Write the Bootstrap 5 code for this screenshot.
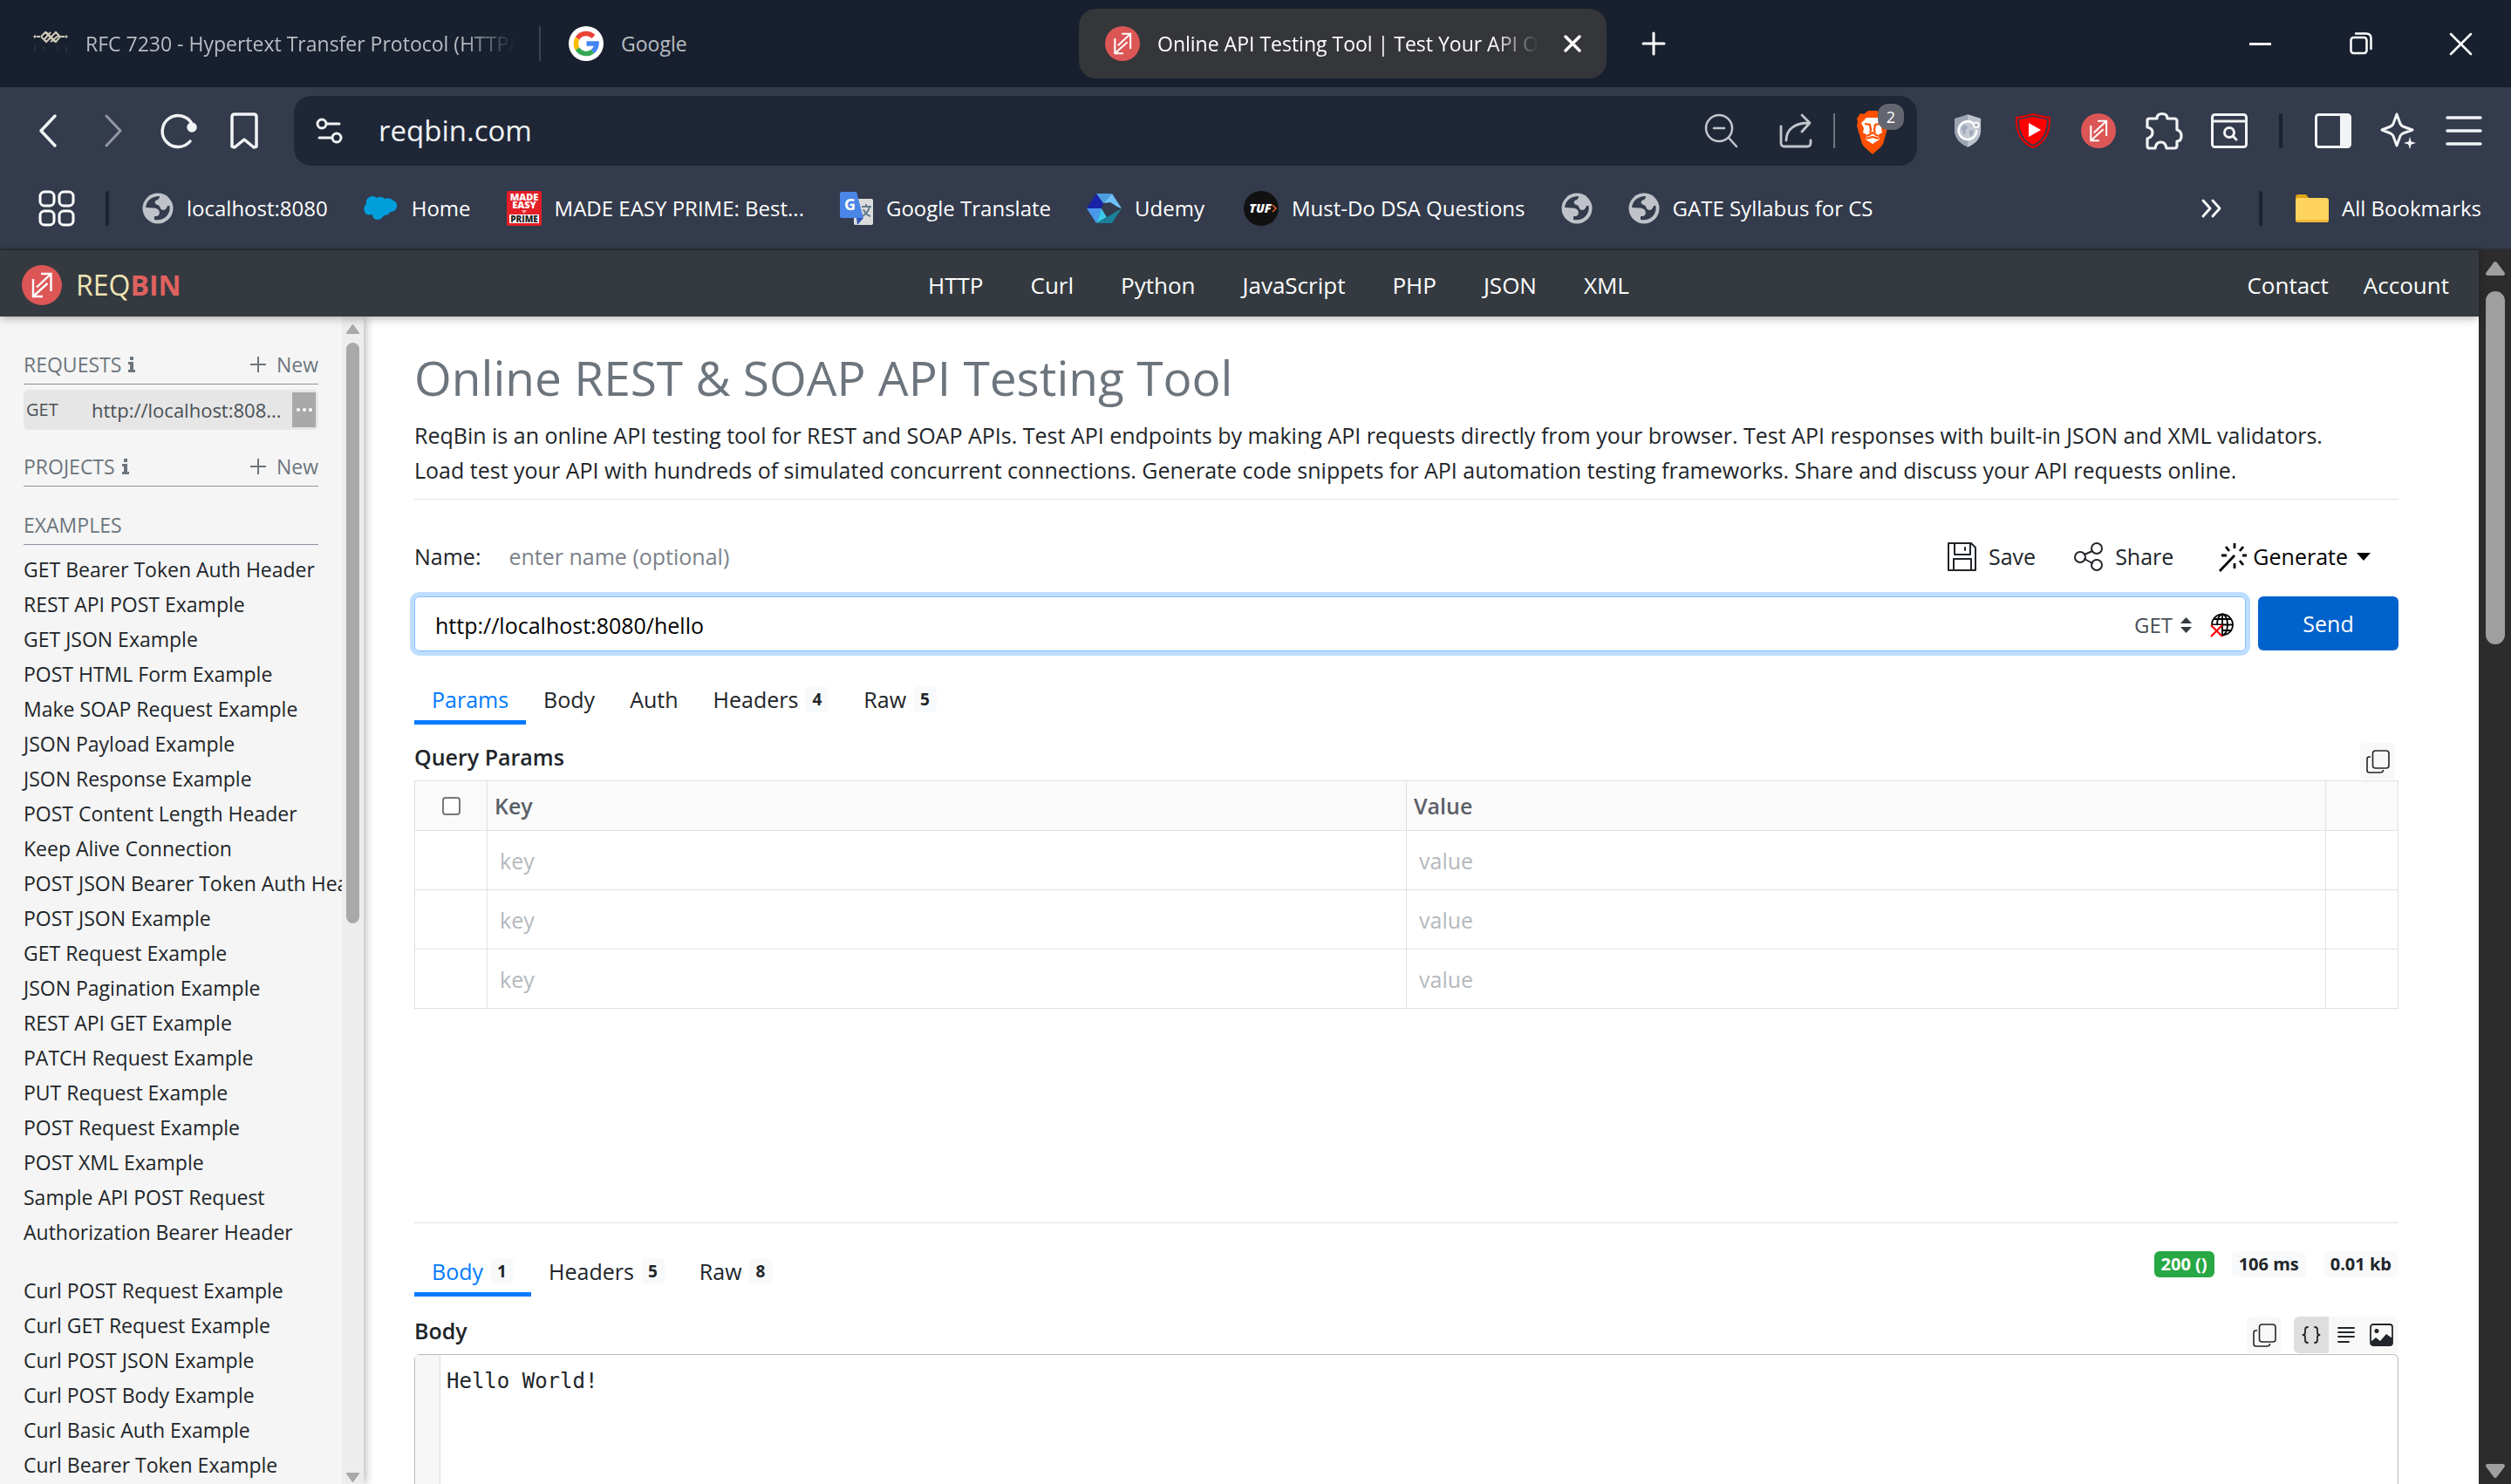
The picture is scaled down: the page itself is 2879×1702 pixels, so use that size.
<!DOCTYPE html>
<html lang="en">
<head>
<meta charset="utf-8">
<meta name="viewport" content="width=device-width, initial-scale=1">
<title>Online API Testing Tool | Test Your API Online</title>
<link href="https://cdn.jsdelivr.net/npm/bootstrap@5.3.0/dist/css/bootstrap.min.css" rel="stylesheet">
<script src="https://cdn.jsdelivr.net/npm/bootstrap@5.3.0/dist/js/bootstrap.bundle.min.js"></script>
<style>
  body { font-family: "Open Sans", "Noto Sans", sans-serif; font-size: 25px; line-height: 40px; color: #212529; background: #fff; }
  svg { display: block; flex: none; overflow: visible; }
  button, input, select { font: inherit; color: inherit; }
  a { color: inherit; text-decoration: none; }
  .plain { background: none; border: 0; padding: 0; }
  .line-icon { fill: none; stroke: currentColor; stroke-linecap: round; stroke-linejoin: round; }
  /* browser tabs */
  .tabstrip { height: 100px; background: #18202f; color: #b9bcc2; font-size: 23px; }
  .btab { height: 80px; gap: 20px; }
  .btab-active { width: 605px; margin-left: 424px; padding: 0 28px 0 30px; background: #35363a; color: #fff; border-radius: 20px; }
  .fade-end { overflow: hidden; white-space: nowrap; -webkit-mask-image: linear-gradient(90deg, #000 88%, transparent); mask-image: linear-gradient(90deg, #000 88%, transparent); }
  .tab-rfc { width: 594px; padding: 0 4px 0 38px; }
  .tab-google { width: 193px; padding-left: 32px; }
  .vline { width: 2px; height: 40px; background: #3b4250; flex: none; }
  .winbtn { width: 115px; height: 100px; color: #fff; }
  /* toolbar */
  .toolbar { height: 100px; padding: 0 17px; background: #333b4c; color: #f2f3f5; }
  .slot { width: 75px; height: 80px; flex: none; display: flex; align-items: center; justify-content: center; }
  .dark-rule { width: 4px; height: 40px; border-radius: 2px; background: #1b2232; flex: none; }
  .rule-tools { margin: 0 20px; }
  .rule-start { margin: 0 38px 0 35px; }
  .rule-end { margin: 0 38px 0 42px; }
  .address { height: 80px; border-radius: 20px; margin: 0 20px; background: #1f2737; padding: 0 16px 0 25px; }
  .address input { font-size: 33px; outline: 0; }
  .count { top: -8px; left: 25px; width: 30px; height: 30px; border-radius: 12px; background: #63666f; font-size: 18px; line-height: 30px; text-align: center; color: #fff; }
  .bookmarks { height: 87px; padding: 0 34px 7px 44px; background: #333b4c; border-bottom: 2px solid #2c2f36; color: #fff; font-size: 24px; }
  .bm { display: flex; align-items: center; gap: 15px; white-space: nowrap; margin-right: 41px; }
  .bm:last-child { margin-right: 0; }
  /* site header */
  .sitebar { height: 76px; background: #343a40; color: #fff; padding: 3px 34px 0 25px; font-size: 26px; position: relative; z-index: 3; box-shadow: 0 2px 10px rgba(0,0,0,.3); }
  .brand-a { font-size: 32px; color: #efe3b4; }
  .brand-a b { color: #e0625f; font-weight: 700; }
  .topnav { gap: 54px; padding-left: 148px; }
  /* scrollbars */
  .pagebar { width: 37px; background: #2c2c2c; padding: 12px 0 6px; flex: none; }
  .pagebar i { width: 22px; border-radius: 11px; background: #9f9f9f; height: 405px; margin-top: 17px; }
  .sidebar { width: 417px; background: #f5f5f5; box-shadow: 2px 0 10px rgba(0,0,0,.3); flex: none; z-index: 2; font-size: 23px; }
  .sidebar-list { padding: 35px 0 0 27px; overflow: hidden; }
  .sidebar-list a.ex { display: block; white-space: nowrap; height: 40px; }
  .ex-gap { height: 27px; }
  .sidegutter { width: 25px; background: #ededed; padding: 9px 0 2px; flex: none; }
  .sidegutter i { width: 15px; border-radius: 8px; background: #a9a9a9; height: 666px; margin-top: 10px; }
  .sec { margin-right: 27px; height: 43px; padding-bottom: 2px; border-bottom: 1px solid #8e92a3; color: #6c757d; }
  .req { margin: 6px 27px 22px 0; height: 46px; background: #e6e6e6; border-radius: 6px; padding: 0 3px; color: #495057; font-size: 22px; }
  .req .verb { width: 75px; font-size: 20px; }
  .req button { width: 27px; height: 40px; background: #a9a9a9; color: #fff; }
  .newbtn { gap: 12px; }
  /* main column */
  .mainpane { padding: 37px 92px 0 58px; min-width: 0; }
  .mainpane h1 { font-size: 55px; line-height: 66px; color: #6c757d; margin: 0 0 13px; font-weight: 400; }
  .rule { border-top: 1px solid #dee2e6; }
  .rule-intro { margin: 13px 0 45px; }
  .namerow { margin-bottom: 26px; gap: 32px; }
  .tools { gap: 44px; }
  .tools button { gap: 14px; }
  .tools button.gen { gap: 6px; }
  .urlbox { height: 63px; border: 1px solid #80bdff; border-radius: 6px; box-shadow: 0 0 0 5px #bfdeff; padding: 2px 13px 0 23px; }
  .urlbox input { outline: 0; color: #000; font-size: 25px; }
  .urlbox select { appearance: none; -webkit-appearance: none; width: 53px; color: #495057; font-size: 24px; }
  .geo { margin-left: 21px; }
  .send { width: 161px; height: 62px; background: #0062cc; color: #fff; border-radius: 6px; margin-left: 14px; }
  .tabs-req { margin-top: 28px; }
  .ptabs button { height: 56px; padding: 3px 20px 0; border-bottom: 5px solid transparent; display: flex; align-items: center; gap: 8px; }
  .ptabs button.on { color: #007bff; border-color: #007bff; }
  .num { min-width: 27px; height: 30px; line-height: 30px; font-size: 19px; font-weight: 700; border-radius: 6px; background: #f8f9fa; color: #212529; padding: 0 7px; text-align: center; white-space: nowrap; }
  .stats { gap: 20px; margin-top: 4px; }
  .stats .num { font-size: 20px; padding: 0 8px; }
  .stats .num-ok { background: #28a745; color: #fff; }
  .h-sub { font-weight: 600; font-size: 25px; line-height: 40px; margin: 0; }
  .subhead { height: 47px; margin-top: 17px; padding-bottom: 1px; }
  .subhead-res { margin-top: 19px; gap: 14px; }
  .toolbtn { width: 40px; height: 42px; background: #f8f8f8; display: flex; align-items: center; justify-content: center; }
  .toolbtn.picked { background: #dedede; }
  .kv { table-layout: fixed; margin: 0; border-color: #dee2e6; }
  .kv th { height: 57px; padding: 0 8px; vertical-align: middle; background: #fafafa; color: #5a6067; font-weight: 600; }
  .kv td { height: 68px; padding: 0 14px; vertical-align: middle; }
  .kv .edge { width: 83px; }
  .kv input[type=text] { width: 100%; outline: 0; }
  .kv input::placeholder { color: #b4b9be; opacity: 1; }
  .namebox::placeholder { color: #7b828a; opacity: 1; }
  .kv input[type=checkbox] { appearance: none; -webkit-appearance: none; width: 21px; height: 21px; border: 2px solid #767676; border-radius: 4px; display: block; margin: auto; background: #fff; }
  .result { border: 1px solid #b9bbbe; border-radius: 6px 6px 0 0; border-bottom: 0; }
  .result .lines { width: 29px; background: #f7f7f7; border-right: 1px solid #ddd; }
  .result pre { font-family: "DejaVu Sans Mono", monospace; font-size: 24px; line-height: 40px; margin: 10px 0 0 7px; }
  .spacer-params { height: 245px; }
  .fit { min-height: 0; min-width: 0; }
</style>
</head>
<body class="vh-100 overflow-hidden d-flex flex-column">
<svg width="0" height="0" class="position-absolute" aria-hidden="true">
  <defs>
    <symbol id="reqbin" viewBox="0 0 46 46"><circle cx="23" cy="23" r="23" fill="#dc5656"/><g fill="none" stroke="#fff" stroke-width="2.400"><path d="M22 10H33.500V30M33.500 10L17 25.500M13 16V36H24M13 36L29.500 21"/></g></symbol>
    <symbol id="globe" viewBox="0 0 36 36"><circle cx="18" cy="18" r="17.500" fill="#bfc3c9"/><path d="M4 17C5 9 11 4 20 4Q20 8 15.500 9Q13.500 11 16 13.500Q20 14 20.500 17Q21 20 25 20Q28 19 29 15L31.500 15C33 25 25 33 14 31V27H17Q21 25 19.500 21Q18 17.500 13 17.500Z" fill="#333b4c"/></symbol>
    <symbol id="copy" viewBox="0 0 27 27"><g fill="none" stroke="#212529" stroke-width="1.600"><rect x="7.500" y="1" width="18.500" height="20" rx="3"/><path d="M5 8H3.500Q1 8 1 10.500V23.500Q1 26 3.500 26H16Q19.500 26 19.500 23"/></g></symbol>
    <symbol id="info" viewBox="0 0 8 18"><path d="M2 0h4v4H2zM0 6h6v9h2v3H0v-3h2V9H0z" fill="#6c757d"/></symbol>
  </defs>
</svg>

<header class="flex-shrink-0">
  <div class="tabstrip d-flex align-items-center">
    <div class="btab tab-rfc d-flex align-items-center">
      <svg width="40" height="28" viewBox="0 0 40 28"><g fill="none" stroke="#cfc9b8" stroke-width="2"><path d="M1 7l2-2M1 5l2 2M37 5l2 2M37 7l2-2M4 6h4M32 6h4M9 6l5-5 11 11M9 6l6 6L26 1l5 5-5 6L15 1M20 1l-8 9M20 12l10-8"/></g><path d="M2 16v8M12 17v5M28 16v6M38 17v8" stroke="#262d38" stroke-width="2"/></svg>
      <span class="fade-end flex-grow-1">RFC 7230 - Hypertext Transfer Protocol (HTTP/1.1)</span>
    </div>
    <div class="vline ms-4"></div>
    <div class="btab tab-google d-flex align-items-center">
      <svg width="40" height="40" viewBox="0 0 40 40"><circle cx="20" cy="20" r="20" fill="#fff"/><g fill="none" stroke-width="5.500"><path d="M28.500 12A12 12 0 0 0 10 14" stroke="#ea4335"/><path d="M10 14A12 12 0 0 0 10 26" stroke="#fbbc05"/><path d="M10 26A12 12 0 0 0 27.500 29" stroke="#34a853"/><path d="M27.500 29A12 12 0 0 0 32 20H20.500" stroke="#4285f4"/></g></svg>
      <span>Google</span>
    </div>
    <div class="btab btab-active d-flex align-items-center">
      <svg width="40" height="40"><use href="#reqbin"/></svg>
      <span class="fade-end flex-grow-1">Online API Testing Tool | Test Your API Online</span>
      <button class="plain ms-2" aria-label="Close tab"><svg class="line-icon" width="22" height="22" viewBox="0 0 22 22" stroke-width="3.500"><path d="M3 3l16 16M19 3L3 19"/></svg></button>
    </div>
    <button class="plain ms-4 ps-3" aria-label="New tab"><svg class="line-icon text-white" width="28" height="28" viewBox="0 0 28 28" stroke-width="3"><path d="M14 2v24M2 14h24"/></svg></button>
    <div class="ms-auto d-flex">
      <button class="plain winbtn d-flex align-items-center justify-content-center" aria-label="Minimise"><svg width="25" height="3"><path d="M0 1.500h25" stroke="#fff" stroke-width="3"/></svg></button>
      <button class="plain winbtn d-flex align-items-center justify-content-center" aria-label="Restore"><svg class="line-icon" width="26" height="26" viewBox="0 0 26 26" stroke-width="2.500"><rect x="1.500" y="6" width="18" height="18" rx="3"/><path d="M7 1.500h12q5.500 0 5.500 5.500v12"/></svg></button>
      <button class="plain winbtn d-flex align-items-center justify-content-center" aria-label="Close"><svg class="line-icon" width="25" height="25" viewBox="0 0 25 25" stroke-width="2.500"><path d="M1 1l23 23M24 1L1 24"/></svg></button>
    </div>
  </div>

  <div class="toolbar d-flex align-items-center">
    <button class="plain slot" aria-label="Back"><svg class="line-icon" width="20" height="38" viewBox="0 0 20 38" stroke-width="3.500"><path d="M18 2L2 19l16 17"/></svg></button>
    <button class="plain slot opacity-50" aria-label="Forward"><svg class="line-icon" width="20" height="38" viewBox="0 0 20 38" stroke-width="3"><path d="M2 2l16 17L2 36"/></svg></button>
    <button class="plain slot" aria-label="Reload"><svg class="line-icon" width="42" height="40" viewBox="0 0 42 40" stroke-width="3.500"><path d="M34 32A18 18 0 1 1 36 12"/><circle cx="36" cy="16" r="4" fill="currentColor"/></svg></button>
    <button class="plain slot" aria-label="Bookmark"><svg class="line-icon" width="32" height="42" viewBox="0 0 32 42" stroke-width="3.500"><path d="M2 5q0-3 3-3h22q3 0 3 3v34l-3 1-11-9-11 9-3-1z"/></svg></button>
    <div class="address d-flex align-items-center flex-grow-1">
      <svg class="line-icon me-3" width="32" height="30" viewBox="0 0 32 30" stroke-width="3"><circle cx="7" cy="7" r="5"/><path d="M13 7h14M4 23h13"/><circle cx="24" cy="23" r="5"/></svg>
      <input class="plain flex-grow-1 ms-4" aria-label="Address" value="reqbin.com">
      <svg class="line-icon" width="38" height="38" viewBox="0 0 38 38" stroke-width="2.500" color="#c3c6cc"><circle cx="17" cy="16" r="15"/><path d="M11 16h12M28 27l9 10"/></svg>
      <svg class="line-icon ms-5" width="38" height="40" viewBox="0 0 38 40" stroke-width="2.800" color="#c3c6cc"><path d="M2 15v19q0 4 4 4h26q4 0 4-4v-3M8 31C8 18 18 11 34 11M26 2l9 9-9 10"/></svg>
      <div class="vline bg-secondary ms-4"></div>
      <div class="position-relative ms-4 me-3">
        <svg width="38" height="46" viewBox="0 0 38 46"><path d="M9 4l5-4h10l5 4 4-1 4 6-1 4 1 4-6 21-3 4-9 8-9-8-3-4L1 17l1-4-1-4 4-6z" fill="#ff5000"/><path d="M12 8h14l6 6-3 6 1 5-5 3 2 5-8 5-8-5 2-5-5-3 1-5-3-6z" fill="#fff"/><path d="M10 15l6 1 1 6-1 3M28 15l-6 1-1 6 1 3M13 29l6-4 6 4M12 32l7-2 7 2" fill="none" stroke="#ff5000" stroke-width="2.200"/></svg>
        <span class="count position-absolute">2</span>
      </div>
    </div>
    <button class="plain slot" aria-label="Guard"><svg width="32" height="40" viewBox="0 0 34 40"><path d="M17 0l16 5v14q0 14-16 21Q1 33 1 19V5z" fill="#9ca4b2"/><path d="M17 0l16 5v14q0 14-16 21z" fill="#bcc2cb"/><circle cx="17" cy="19" r="10.500" fill="#c3cad3"/><path d="M9 16q4-5 7-2t-2 5l1 4-3 1zM19 20l5-1-1 6-3 2z" fill="#a0aab8"/><path d="M24 11A11 11 0 1 0 28 19" fill="none" stroke="#fff" stroke-width="2.800"/><circle cx="27.500" cy="13" r="3" fill="#aab2be" stroke="#fff" stroke-width="2"/></svg></button>
    <button class="plain slot" aria-label="Video blocker"><svg width="40" height="40" viewBox="0 0 40 40"><path d="M20 1q10 3 19 4 1 26-19 34Q0 31 1 5q9-1 19-4z" fill="#333b4c" stroke="#e60000" stroke-width="2"/><path d="M20 4q8 2 16 3 0 22-16 29Q4 29 4 7q8-1 16-3z" fill="#f00"/><path d="M15 11l14 8-14 8z" fill="#fff"/></svg></button>
    <button class="plain slot" aria-label="ReqBin extension"><svg width="40" height="40"><use href="#reqbin"/></svg></button>
    <button class="plain slot" aria-label="Extensions"><svg class="line-icon" width="42" height="43" viewBox="0 0 42 43" stroke-width="3.200"><path d="M4 7H13Q13 1.500 19 1.500T25 7H33Q36 7 36 10V20Q41 21 41 27T36 33V38Q36 41 33 41H24Q23 34 17.500 34T11 41H4Q2 41 2 38V30Q8 28 8 23T2 17V9Q2 7 4 7z"/></svg></button>
    <button class="plain slot" aria-label="Search tabs"><svg class="line-icon" width="42" height="40" viewBox="0 0 42 40" stroke-width="3"><rect x="1.500" y="1.500" width="39" height="37" rx="3"/><path d="M2 9h38"/><circle cx="21" cy="22" r="5.500"/><path d="M25 26l4 4"/></svg></button>
    <div class="dark-rule rule-tools"></div>
    <button class="plain slot" aria-label="Side panel"><svg width="42" height="40" viewBox="0 0 42 40"><rect x="1.500" y="1.500" width="39" height="37" rx="3" fill="none" stroke="#f2f3f5" stroke-width="3"/><path d="M29 1h10v38H29z" fill="#f2f3f5"/></svg></button>
    <button class="plain slot" aria-label="Assistant"><svg class="line-icon" width="42" height="42" viewBox="0 0 42 42" stroke-width="3"><path d="M19 2l4 11q1 2 3 3l11 4-11 4q-2 1-3 3l-4 11-4-11q-1-2-3-3L2 20l10-4q2-1 3-3z"/><path d="M34 26l2 7 7 2-7 2-2 7-2-7-7-2 7-2z" fill="currentColor" stroke="#333b4c" stroke-width="1"/></svg></button>
    <button class="plain slot" aria-label="Menu"><svg class="line-icon" width="42" height="34" viewBox="0 0 42 34" stroke-width="3.500"><path d="M2 2h38M2 17h38M2 32h38"/></svg></button>
  </div>

  <nav class="bookmarks d-flex align-items-center" aria-label="Bookmarks">
    <svg class="line-icon" width="42" height="42" viewBox="0 0 42 42" stroke-width="3"><rect x="2" y="2" width="16" height="16" rx="5"/><rect x="24" y="2" width="16" height="16" rx="5"/><rect x="2" y="24" width="16" height="16" rx="5"/><rect x="24" y="24" width="16" height="16" rx="5"/></svg>
    <div class="dark-rule rule-start"></div>
    <a class="bm" href="#"><svg width="36" height="36"><use href="#globe"/></svg>localhost:8080</a>
    <a class="bm" href="#"><svg width="40" height="28" viewBox="0 0 40 28"><path d="M3 9q-1-4 2-7 5-4 10 0 5-3 9 1 6-2 10 2 5 2 4 7-1 6-8 6-1 4-7 4-2 5-8 5-5-1-5-6-7 2-9-3-2-6 2-9z" fill="#009edb"/></svg>Home</a>
    <a class="bm" href="#"><svg width="40" height="40" viewBox="0 0 40 40"><rect width="40" height="40" rx="2" fill="#e31e26"/><text x="20" y="11" font-size="11" font-weight="800" fill="#fff" text-anchor="middle">MADE</text><text x="20" y="20" font-size="11" font-weight="800" fill="#fff" text-anchor="middle">EASY</text><path d="M17 22h6l-3 4z" fill="#f6a8ab"/><rect x="3" y="27" width="34" height="10" fill="#fff"/><text x="20" y="36" font-size="10" font-weight="800" fill="#222" text-anchor="middle">PRIME</text></svg>MADE EASY PRIME: Best...</a>
    <a class="bm" href="#"><svg width="38" height="38" viewBox="0 0 38 38"><rect x="16" y="8" width="22" height="30" rx="2" fill="#dcdcdc"/><path d="M2 0h17l8 30H2q-2 0-2-2V2q0-2 2-2z" fill="#4a86e8"/><path d="M19 30h8l-7 8z" fill="#3155b5"/><text x="5" y="21" font-size="18" font-weight="700" fill="#fff">G</text><path d="M25 17h11M30 14v3M34 17q-1 6-8 11M27 20q2 6 8 8" fill="none" stroke="#607d8b" stroke-width="2"/></svg>Google Translate</a>
    <a class="bm" href="#"><svg width="40" height="34" viewBox="0 0 40 34"><path d="M0 17L11 0l8 11-2 6z" fill="#1722a8"/><path d="M11 0h18l-10 11z" fill="#4a9fe0"/><path d="M29 0l11 17-21-6z" fill="#6fc1f7"/><path d="M0 17h17l-6 17z" fill="#4a97ee"/><path d="M17 17l6 10-12 7z" fill="#3cc8ea"/><path d="M40 17L29 34H11l12-7z" fill="#1c7f98"/><path d="M19 11l8-1 11 7-15 10-6-10z" fill="#333b4c"/></svg>Udemy</a>
    <a class="bm" href="#"><svg class="ms-1" width="40" height="40" viewBox="0 0 40 40"><circle cx="20" cy="20" r="20" fill="#111"/><text x="19" y="25" font-size="14" font-weight="800" font-style="italic" fill="#fff" text-anchor="middle">TUF</text><path d="M33 16l4 4-4 4" fill="none" stroke="#e8632b" stroke-width="1.500"/></svg>Must-Do DSA Questions</a>
    <a class="bm" href="#" aria-label="Saved page"><svg width="36" height="36"><use href="#globe"/></svg></a>
    <a class="bm" href="#"><svg width="36" height="36"><use href="#globe"/></svg>GATE Syllabus for CS</a>
    <button class="plain ms-auto" aria-label="More bookmarks"><svg class="line-icon" width="24" height="20" viewBox="0 0 24 20" stroke-width="2.800"><path d="M2 1l8 9-8 9M13 1l8 9-8 9"/></svg></button>
    <div class="dark-rule rule-end"></div>
    <a class="bm" href="#"><svg width="38" height="32" viewBox="0 0 38 32"><path d="M0 3q0-3 3-3h9l4 5h-2l-3 5H0z" fill="#dfa31a"/><rect y="4" width="38" height="28" rx="3" fill="#ffd45e"/><path d="M0 29h38q0 3-3 3H3q-3 0-3-3z" fill="#eeb83c"/></svg>All Bookmarks</a>
  </nav>
</header>

<div class="d-flex flex-grow-1 fit">
  <div class="d-flex flex-column flex-grow-1 fit">
    <div class="sitebar d-flex align-items-center flex-shrink-0">
      <a href="#" class="brand-a d-flex align-items-center"><svg width="46" height="46" class="me-3"><use href="#reqbin"/></svg><span>REQ<b>BIN</b></span></a>
      <nav class="topnav d-flex mx-auto"><a href="#">HTTP</a><a href="#">Curl</a><a href="#">Python</a><a href="#">JavaScript</a><a href="#">PHP</a><a href="#">JSON</a><a href="#">XML</a></nav>
      <nav class="d-flex"><a class="me-3 pe-4" href="#">Contact</a><a href="#">Account</a></nav>
    </div>
    <div class="d-flex flex-grow-1 fit">
      <aside class="sidebar d-flex">
        <div class="sidebar-list flex-grow-1">
          <div class="sec d-flex align-items-center">REQUESTS <svg class="ms-2" width="8" height="18"><use href="#info"/></svg><button class="plain newbtn ms-auto d-flex align-items-center"><svg width="18" height="18"><path d="M9 0v18M0 9h18" stroke="#6c757d" stroke-width="2"/></svg>New</button></div>
          <div class="req d-flex align-items-center"><span class="verb">GET</span><a href="#" class="flex-grow-1">http://localhost:808...</a><button class="plain d-flex align-items-center justify-content-center" aria-label="Request menu"><svg width="18" height="4" fill="#fff"><circle cx="2" cy="2" r="2"/><circle cx="9" cy="2" r="2"/><circle cx="16" cy="2" r="2"/></svg></button></div>
          <div class="sec d-flex align-items-center">PROJECTS <svg class="ms-2" width="8" height="18"><use href="#info"/></svg><button class="plain newbtn ms-auto d-flex align-items-center"><svg width="18" height="18"><path d="M9 0v18M0 9h18" stroke="#6c757d" stroke-width="2"/></svg>New</button></div>
          <div class="sec d-flex align-items-center mt-4 mb-2">EXAMPLES</div>
          <a class="ex" href="#">GET Bearer Token Auth Header</a>
          <a class="ex" href="#">REST API POST Example</a>
          <a class="ex" href="#">GET JSON Example</a>
          <a class="ex" href="#">POST HTML Form Example</a>
          <a class="ex" href="#">Make SOAP Request Example</a>
          <a class="ex" href="#">JSON Payload Example</a>
          <a class="ex" href="#">JSON Response Example</a>
          <a class="ex" href="#">POST Content Length Header</a>
          <a class="ex" href="#">Keep Alive Connection</a>
          <a class="ex" href="#">POST JSON Bearer Token Auth Header</a>
          <a class="ex" href="#">POST JSON Example</a>
          <a class="ex" href="#">GET Request Example</a>
          <a class="ex" href="#">JSON Pagination Example</a>
          <a class="ex" href="#">REST API GET Example</a>
          <a class="ex" href="#">PATCH Request Example</a>
          <a class="ex" href="#">PUT Request Example</a>
          <a class="ex" href="#">POST Request Example</a>
          <a class="ex" href="#">POST XML Example</a>
          <a class="ex" href="#">Sample API POST Request</a>
          <a class="ex" href="#">Authorization Bearer Header</a>
          <div class="ex-gap"></div>
          <a class="ex" href="#">Curl POST Request Example</a>
          <a class="ex" href="#">Curl GET Request Example</a>
          <a class="ex" href="#">Curl POST JSON Example</a>
          <a class="ex" href="#">Curl POST Body Example</a>
          <a class="ex" href="#">Curl Basic Auth Example</a>
          <a class="ex" href="#">Curl Bearer Token Example</a>
        </div>
        <div class="sidegutter d-flex flex-column align-items-center">
          <svg width="15" height="11"><path d="M7.500 1L14 10H1z" fill="#a9a9a9" stroke="#a9a9a9" stroke-width="2" stroke-linejoin="round"/></svg><i></i>
          <svg class="mt-auto" width="15" height="11"><path d="M7.500 10L14 1H1z" fill="#a9a9a9" stroke="#a9a9a9" stroke-width="2" stroke-linejoin="round"/></svg>
        </div>
      </aside>

      <main class="mainpane d-flex flex-column flex-grow-1">
        <h1>Online REST &amp; SOAP API Testing Tool</h1>
        <p class="m-0 text-nowrap">ReqBin is an online API testing tool for REST and SOAP APIs. Test API endpoints by making API requests directly from your browser. Test API responses with built-in JSON and XML validators.<br>Load test your API with hundreds of simulated concurrent connections. Generate code snippets for API automation testing frameworks. Share and discuss your API requests online.</p>
        <div class="rule rule-intro"></div>
        <div class="namerow d-flex align-items-center">
          <label for="reqname">Name:</label>
          <input id="reqname" class="plain namebox flex-grow-1" placeholder="enter name (optional)">
          <div class="tools d-flex align-items-center me-4 pe-2">
            <button class="plain d-flex align-items-center"><svg class="line-icon" width="33" height="33" viewBox="0 0 33 33" stroke-width="2"><path d="M1 1h26l5 5v26H1zM8 1v13h18V1M7 32V19h20v13M20 6v3"/></svg>Save</button>
            <button class="plain d-flex align-items-center"><svg class="line-icon" width="33" height="33" viewBox="0 0 33 33" stroke-width="2"><circle cx="7" cy="17" r="6"/><circle cx="26" cy="7" r="6"/><circle cx="26" cy="26" r="6"/><path d="M12 14l9-4M12 19l9 5"/></svg>Share</button>
            <button class="plain gen d-flex align-items-center text-black ms-2"><svg class="line-icon" width="33" height="33" viewBox="0 0 33 33" stroke-width="2.800"><path d="M1 33l17-18M18 1v6M18 24v6M3 15h6M27 15h5M8 5l4 5M28 5l-4 5M24 21l4 5" stroke-linecap="butt"/></svg>Generate<svg class="ms-1" width="16" height="9"><path d="M0 0h16L8 9z"/></svg></button>
          </div>
        </div>
        <div class="d-flex">
          <div class="urlbox d-flex align-items-center flex-grow-1">
            <input class="plain flex-grow-1" aria-label="Request URL" value="http://localhost:8080/hello">
            <select class="plain" aria-label="Method"><option>GET</option></select>
            <svg width="13" height="18" fill="#343a40"><path d="M0 7h13L6.500 0zM0 11h13l-6.500 7z"/></svg>
            <button class="plain geo" aria-label="Location off"><svg width="27" height="28" viewBox="0 0 27 28"><g fill="none" stroke="#000" stroke-width="1.800"><circle cx="14" cy="13.500" r="12"/><ellipse cx="14" cy="13.500" rx="6" ry="12"/><path d="M14 1v25M2 13.500h24M4 7h20M4 20h20"/></g><path d="M0 14h13v14H0z" fill="#fff"/><path d="M1 14l13 13M14 14L1 27" stroke="#f00" stroke-width="2.200"/></svg></button>
          </div>
          <button class="plain send">Send</button>
        </div>
        <div class="ptabs tabs-req d-flex">
          <button class="plain on">Params</button><button class="plain">Body</button><button class="plain">Auth</button>
          <button class="plain">Headers<span class="num">4</span></button><button class="plain">Raw<span class="num">5</span></button>
        </div>
        <div class="subhead d-flex justify-content-between align-items-end pe-1">
          <h2 class="h-sub align-self-start">Query Params</h2>
          <button class="plain toolbtn rounded-2" aria-label="Copy"><svg width="27" height="27"><use href="#copy"/></svg></button>
        </div>
        <table class="table table-bordered kv">
          <colgroup><col class="edge"><col><col><col class="edge"></colgroup>
          <thead><tr><th><input type="checkbox" aria-label="Select all"></th><th>Key</th><th>Value</th><th></th></tr></thead>
          <tbody>
            <tr><td></td><td><input class="plain" type="text" aria-label="Key 1" placeholder="key"></td><td><input class="plain" type="text" aria-label="Value 1" placeholder="value"></td><td></td></tr>
            <tr><td></td><td><input class="plain" type="text" aria-label="Key 2" placeholder="key"></td><td><input class="plain" type="text" aria-label="Value 2" placeholder="value"></td><td></td></tr>
            <tr><td></td><td><input class="plain" type="text" aria-label="Key 3" placeholder="key"></td><td><input class="plain" type="text" aria-label="Value 3" placeholder="value"></td><td></td></tr>
          </tbody>
        </table>
        <div class="spacer-params"></div>
        <div class="rule"></div>
        <div class="d-flex justify-content-between mt-4 pt-1">
          <div class="ptabs d-flex">
            <button class="plain on">Body<span class="num">1</span></button><button class="plain">Headers<span class="num">5</span></button><button class="plain">Raw<span class="num">8</span></button>
          </div>
          <div class="stats d-flex"><span class="num num-ok">200 ()</span><span class="num">106 ms</span><span class="num">0.01 kb</span></div>
        </div>
        <div class="subhead subhead-res d-flex align-items-end">
          <h2 class="h-sub align-self-start me-auto">Body</h2>
          <button class="plain toolbtn rounded-2" aria-label="Copy"><svg width="27" height="27"><use href="#copy"/></svg></button>
          <div class="d-flex rounded-2 overflow-hidden">
            <button class="plain toolbtn picked" aria-label="Formatted"><svg class="line-icon" width="20" height="20" viewBox="0 0 20 20" stroke-width="1.800"><path d="M6 1Q3 1 3 4v3q0 3-2.500 3 2.500 0 2.500 3v3q0 3 3 3M14 1q3 0 3 3v3q0 3 2.500 3-2.500 0-2.500 3v3q0 3-3 3"/></svg></button>
            <button class="plain toolbtn" aria-label="Text"><svg class="line-icon" width="20" height="18" viewBox="0 0 20 18" stroke-width="1.800"><path d="M1 1h18M1 6h18M1 11h18M1 17h12"/></svg></button>
            <button class="plain toolbtn" aria-label="Preview"><svg width="27" height="26" viewBox="0 0 27 26"><rect x="1" y="1" width="25" height="24" rx="3" fill="none" stroke="#212529" stroke-width="1.800"/><circle cx="8" cy="8.500" r="2.500" fill="#212529"/><path d="M1 21l6-5 5 4 7-8 7 5v8H1z" fill="#212529"/></svg></button>
          </div>
        </div>
        <div class="result d-flex flex-grow-1"><div class="lines"></div><pre>Hello World!</pre></div>
      </main>
    </div>
  </div>
  <div class="pagebar d-flex flex-column align-items-center">
    <svg width="24" height="18"><path d="M12 3L21 15H3z" fill="#9f9f9f" stroke="#9f9f9f" stroke-width="4" stroke-linejoin="round"/></svg><i></i>
    <svg class="mt-auto" width="24" height="18"><path d="M12 15L21 3H3z" fill="#9f9f9f" stroke="#9f9f9f" stroke-width="4" stroke-linejoin="round"/></svg>
  </div>
</div>
</body>
</html>
